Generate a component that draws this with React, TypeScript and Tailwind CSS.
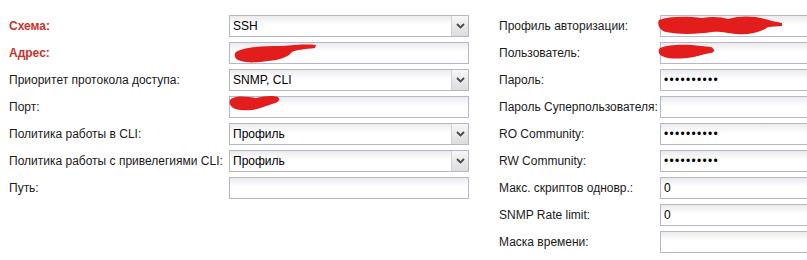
import React from 'react'

type Field = {
  label: string
  kind: 'text' | 'select'
  value?: string
  secret?: boolean
  required?: boolean
  scribble?: 'addr' | 'port' | 'profile' | 'user'
}

const leftFields: Field[] = [
  { label: 'Схема:', kind: 'select', value: 'SSH', required: true },
  { label: 'Адрес:', kind: 'text', required: true, scribble: 'addr' },
  { label: 'Приоритет протокола доступа:', kind: 'select', value: 'SNMP, CLI' },
  { label: 'Порт:', kind: 'text', scribble: 'port' },
  { label: 'Политика работы в CLI:', kind: 'select', value: 'Профиль' },
  { label: 'Политика работы с привелегиями CLI:', kind: 'select', value: 'Профиль' },
  { label: 'Путь:', kind: 'text' },
]

const rightFields: Field[] = [
  { label: 'Профиль авторизации:', kind: 'text', scribble: 'profile' },
  { label: 'Пользователь:', kind: 'text', scribble: 'user' },
  { label: 'Пароль:', kind: 'text', value: '••••••••••', secret: true },
  { label: 'Пароль Суперпользователя:', kind: 'text' },
  { label: 'RO Community:', kind: 'text', value: '••••••••••', secret: true },
  { label: 'RW Community:', kind: 'text', value: '••••••••••', secret: true },
  { label: 'Макс. скриптов одновр.:', kind: 'text', value: '0' },
  { label: 'SNMP Rate limit:', kind: 'text', value: '0' },
  { label: 'Маска времени:', kind: 'text' },
]

// red marker strokes hiding values in the original
function Scribble({ type }: { type: NonNullable<Field['scribble']> }) {
  if (type === 'addr')
    return (
      <svg className="absolute left-[2px] top-[0px]" width="90" height="22" viewBox="0 0 90 22">
        <path d="M4 9 C12 4 30 3 50 3 C62 2 74 1 84 2 L83 5 C72 6 64 7 60 9 C56 14 48 17 36 18 C24 20 12 20 6 17 C2 15 2 11 4 9 Z" fill="#e31c1c" />
      </svg>
    )
  if (type === 'port')
    return (
      <svg className="absolute left-[-2px] top-[-4px]" width="56" height="22" viewBox="0 0 56 22">
        <path d="M3 6 C10 2 20 4 28 5 C36 3 44 2 50 4 C53 7 50 10 44 11 C38 13 34 15 24 17 C14 18 6 17 3 13 C1 10 1 8 3 6 Z" fill="#e31c1c" />
      </svg>
    )
  if (type === 'profile')
    return (
      <svg className="absolute left-[-5px] top-[-1px]" width="135" height="24" viewBox="0 0 135 24">
        <path d="M3 5 C14 1 30 1 46 3 C56 1 66 2 72 4 C86 0 102 1 116 6 L126 8 L126 11 L112 12 C104 18 92 20 80 19 C70 18 64 16 56 17 C44 19 24 20 10 17 C3 15 1 9 3 5 Z" fill="#e31c1c" />
      </svg>
    )
  return (
    <svg className="absolute left-[-4px] top-[0px]" width="64" height="20" viewBox="0 0 64 20">
      <path d="M3 5 C12 1 30 1 44 3 L54 4 C58 6 58 9 54 10 C46 11 40 14 30 15 C20 16 10 16 5 13 C1 11 1 7 3 5 Z" fill="#e31c1c" />
    </svg>
  )
}

function Input({ field, width }: { field: Field; width: string }) {
  return (
    <div
      className={`relative flex h-[22px] shrink-0 border border-[#b5b8c8] bg-[linear-gradient(to_bottom,#ebebeb,#ffffff_45%)] ${width}`}
    >
      <span
        className={`flex-1 truncate pl-[3px] text-[12px] leading-[20px] text-black ${
          field.secret ? 'tracking-[1.3px]' : ''
        }`}
      >
        {field.value}
      </span>
      {field.kind === 'select' && (
        <span className="flex w-[17px] items-center justify-center border-l border-[#d3d3d3] bg-[linear-gradient(to_bottom,#f7f7f7,#dcdcdc)]">
          <svg width="9" height="6" viewBox="0 0 9 6">
            <path d="M1 1 L4.5 4.5 L8 1" fill="none" stroke="#4a4a4a" strokeWidth="1.8" />
          </svg>
        </span>
      )}
      {field.scribble && <Scribble type={field.scribble} />}
    </div>
  )
}

function Row({ field, labelWidth, inputWidth }: { field: Field; labelWidth: string; inputWidth: string }) {
  return (
    <div className="flex h-[22px] items-center">
      <span
        className={`shrink-0 text-[12px] ${labelWidth} ${
          field.required ? 'font-bold text-[#c8322c]' : 'text-[#1a1a1a]'
        }`}
      >
        {field.label}
      </span>
      <Input field={field} width={inputWidth} />
    </div>
  )
}

export default function App() {
  return (
    <div
      className="flex h-[260px] w-[807px] overflow-hidden bg-white pt-[15px]"
      style={{ fontFamily: '"Liberation Sans", Arial, sans-serif' }}
    >
      <div className="flex w-[499px] shrink-0 flex-col gap-[5px] pl-[9px]">
        {leftFields.map((f) => (
          <Row key={f.label} field={f} labelWidth="w-[220px]" inputWidth="w-[240px]" />
        ))}
      </div>
      <div className="flex shrink-0 flex-col gap-[5px]">
        {rightFields.map((f) => (
          <Row key={f.label} field={f} labelWidth="w-[161px]" inputWidth="w-[170px]" />
        ))}
      </div>
    </div>
  )
}
